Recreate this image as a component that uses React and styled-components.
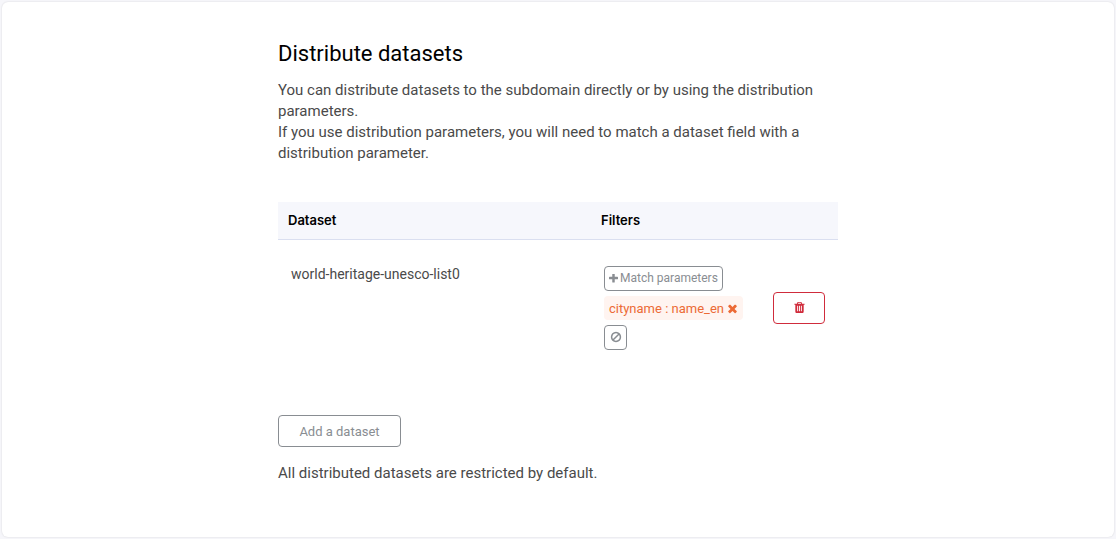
import React from "react";
import styled, { createGlobalStyle } from "styled-components";

const GlobalStyle = createGlobalStyle`
  *, *::before, *::after { box-sizing: border-box; }
  body {
    margin: 0;
    background: #f6f6fa;
    color: #4a4a4a;
    font-family: Roboto, "Liberation Sans", sans-serif;
    font-size: 15px;
    line-height: 21px;
  }
`;

const Page = styled.div`
  display: flex;
  min-height: 100vh;
  padding: 2px;
`;

const Card = styled.main`
  flex: 1;
  padding: 40px 16px;
  background: #fff;
  border-radius: 6px;
  box-shadow: 0 0 2px rgba(0, 0, 0, 0.14);
`;

const Content = styled.section`
  max-width: 560px;
  margin: 0 auto;
`;

const Title = styled.h1`
  margin: 0 0 15px;
  color: #000;
  font-size: 22px;
  font-weight: 400;
  line-height: 23px;
`;

const Paragraph = styled.p`
  margin: 0;
`;

const Note = styled(Paragraph)`
  margin-top: 16px;
`;

const Table = styled.table`
  width: 100%;
  margin: 38px 0;
  border-collapse: collapse;
  table-layout: fixed;
  font-size: 14px;
`;

const HeadCell = styled.th`
  width: ${(p) => p.$width || "auto"};
  height: 37px;
  padding: 0 10px;
  background: #f6f7fc;
  border-bottom: 1px solid #dadff0;
  color: #000;
  font-family: Inter, "Liberation Sans", sans-serif;
  font-size: 13px;
  font-weight: 600;
  text-align: left;
`;

const Cell = styled.td`
  padding: 24px 13px 25px;
  vertical-align: ${(p) => p.$align || "top"};
`;

const Filters = styled.div`
  display: flex;
  flex-direction: column;
  align-items: flex-start;
  gap: 5px;
  padding: 2px 0;
`;

const Button = styled.button`
  display: inline-flex;
  align-items: center;
  justify-content: center;
  height: 32px;
  padding: 0 20px;
  background: #fff;
  border: 1px solid ${(p) => (p.$danger ? "#d02c3c" : "#898d92")};
  border-radius: 4px;
  color: ${(p) => (p.$danger ? "#d02c3c" : "#898d92")};
  font: inherit;
  font-size: 13px;
  cursor: pointer;
`;

const AddButton = styled(Button)`
  min-width: 123px;
  padding-top: 2px;
`;

const SmallButton = styled(Button)`
  gap: 2px;
  height: 25px;
  padding: 1px 4px 0;
  font-size: 12px;
`;

const IconButton = styled(SmallButton)`
  width: 23px;
  padding: 0;
`;

const DeleteButton = styled(Button)`
  width: 52px;
  padding: 0;
`;

const Tag = styled.span`
  display: inline-flex;
  align-items: center;
  gap: 2px;
  height: 24px;
  padding: 1px 4px 0 5px;
  background: #fff4f0;
  border-radius: 4px;
  color: #ec6a35;
  font-size: 13px;
  white-space: nowrap;
`;

const RemoveButton = styled.button`
  display: inline-flex;
  padding: 0;
  background: none;
  border: 0;
  color: inherit;
  cursor: pointer;
`;

const Svg = styled.svg`
  display: block;
  flex: none;
  fill: currentColor;
`;

const paths = {
  plus: "M1600 736v192q0 40-28 68t-68 28h-416v416q0 40-28 68t-68 28h-192q-40 0-68-28t-28-68v-416h-416q-40 0-68-28t-28-68v-192q0-40 28-68t68-28h416v-416q0-40 28-68t68-28h192q40 0 68 28t28 68v416h416q40 0 68 28t28 68z",
  times:
    "M1490 1322q0 40-28 68l-136 136q-28 28-68 28t-68-28l-294-294-294 294q-28 28-68 28t-68-28l-136-136q-28-28-28-68t28-68l294-294-294-294q-28-28-28-68t28-68l136-136q28-28 68-28t68 28l294 294 294-294q28-28 68-28t68 28l136 136q28 28 28 68t-28 68l-294 294 294 294q28 28 28 68z",
  trash:
    "M704 1376v-704q0-14-9-23t-23-9h-64q-14 0-23 9t-9 23v704q0 14 9 23t23 9h64q14 0 23-9t9-23zm256 0v-704q0-14-9-23t-23-9h-64q-14 0-23 9t-9 23v704q0 14 9 23t23 9h64q14 0 23-9t9-23zm256 0v-704q0-14-9-23t-23-9h-64q-14 0-23 9t-9 23v704q0 14 9 23t23 9h64q14 0 23-9t9-23zm-544-992h448l-48-117q-7-9-17-11h-317q-10 2-17 11zm928 32v64q0 14-9 23t-23 9h-96v948q0 83-47 143.5t-113 60.5h-832q-66 0-113-58.5t-47-141.5v-952h-96q-14 0-23-9t-9-23v-64q0-14 9-23t23-9h309l70-167q15-37 54-63t79-26h320q40 0 79 26t54 63l70 167h309q14 0 23 9t9 23z",
  ban: "M1440 893q0-161-87-295l-754 753q137 89 297 89 111 0 211.5-43.5t173.5-116.5 116-174.5 43-212.5zm-999 299l755-754q-135-91-300-91-148 0-273 73t-198 199-73 274q0 162 89 299zm1223-299q0 157-61 300t-163.5 246-245 164-298.5 61-298.5-61-245-164-163.5-246-61-300 61-299.5 163.5-245.5 245-164 298.5-61 298.5 61 245 164 163.5 245.5 61 299.5z",
};

function Icon({ name, size = 13, box = "0 0 1792 1792" }) {
  return (
    <Svg viewBox={box} width={size} height={size} aria-hidden="true">
      <path d={paths[name]} />
    </Svg>
  );
}

export default function App() {
  return (
    <>
      <GlobalStyle />
      <Page>
        <Card>
          <Content>
            <Title>Distribute datasets</Title>
            <Paragraph>
              You can distribute datasets to the subdomain directly or by using the distribution
              parameters.
            </Paragraph>
            <Paragraph>
              If you use distribution parameters, you will need to match a dataset field with a
              distribution parameter.
            </Paragraph>
            <Table>
              <thead>
                <tr>
                  <HeadCell scope="col">Dataset</HeadCell>
                  <HeadCell scope="col" $width="169px">Filters</HeadCell>
                  <HeadCell as="td" $width="78px" />
                </tr>
              </thead>
              <tbody>
                <tr>
                  <Cell>world-heritage-unesco-list0</Cell>
                  <Cell>
                    <Filters>
                      <SmallButton type="button">
                        <Icon name="plus" size={9} box="192 192 1408 1408" />
                        Match parameters
                      </SmallButton>
                      <Tag>
                        cityname : name_en
                        <RemoveButton type="button" aria-label="Remove filter">
                          <Icon name="times" />
                        </RemoveButton>
                      </Tag>
                      <IconButton type="button" aria-label="Clear filters">
                        <Icon name="ban" size={12} />
                      </IconButton>
                    </Filters>
                  </Cell>
                  <Cell $align="middle">
                    <DeleteButton type="button" $danger aria-label="Delete dataset">
                      <Icon name="trash" />
                    </DeleteButton>
                  </Cell>
                </tr>
              </tbody>
            </Table>
            <AddButton type="button">Add a dataset</AddButton>
            <Note>All distributed datasets are restricted by default.</Note>
          </Content>
        </Card>
      </Page>
    </>
  );
}
